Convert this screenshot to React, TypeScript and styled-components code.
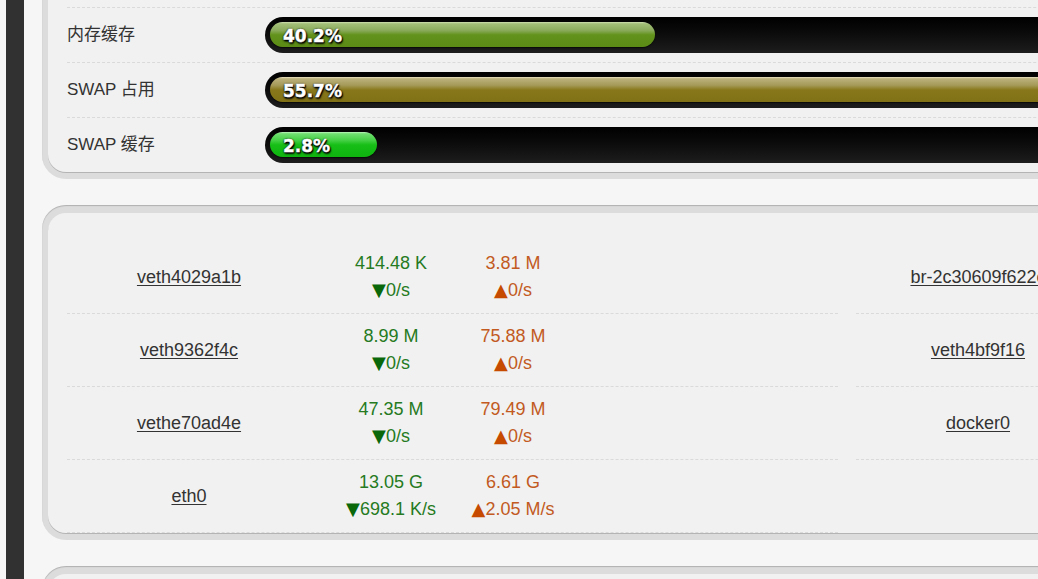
import React from 'react';
import styled, { createGlobalStyle } from 'styled-components';

const Global = createGlobalStyle`
  html, body { margin: 0; padding: 0; background: #f6f6f6; overflow: hidden; }
  body { font-family: "Liberation Sans", Arial, "Noto Sans CJK SC", sans-serif; color: #333; }
`;

const Shell = styled.div`
  display: flex;
  align-items: stretch;
  min-height: 100vh;
  width: 1700px;
`;

const SideEdge = styled.div`
  flex: none;
  width: 18px;
  margin-left: 6px;
  background: #313131;
`;

const Main = styled.main`
  flex: none;
  width: 1610px;
  margin-left: 18px;
  margin-top: -41px;
  display: flex;
  flex-direction: column;
  gap: 26px;
`;

const Frame = styled.section`
  background: #dcdcdc;
  border-radius: 24px;
  padding: 8px 6px 7px;
  box-shadow: inset 0 1px 1px rgba(0, 0, 0, 0.2);
`;

const Inner = styled.div<{ $top: number; $minH?: number }>`
  background: #f1f1f1;
  border-radius: 18px;
  box-shadow: 0 1px 0 #b4b4b4;
  padding: ${(p) => p.$top}px 19px 0;
  min-height: ${(p) => p.$minH ?? 0}px;
`;

const StatRow = styled.div`
  display: grid;
  grid-template-columns: 198px 1fr;
  align-items: center;
  padding: 9px 0;
  border-top: 1px dashed #dadada;
`;

const StatLabel = styled.div`
  font-size: 17px;
  color: #333;
  padding-bottom: 6px;
`;

const Track = styled.div`
  box-sizing: border-box;
  height: 36px;
  border-radius: 18px;
  background: linear-gradient(to bottom, #000 0%, #0a0a0a 40%, #1d1d1d 100%);
  padding: 5px 0 6px 5px;
`;

type Tone = 'green' | 'olive' | 'lime';

const tones: Record<Tone, string> = {
  green:
    'linear-gradient(to bottom, #d0e0b4 0%, #a3bf78 7%, #8bab5c 33%, #62921b 52%, #5b8b15 100%)',
  olive:
    'linear-gradient(to bottom, #ece4c2 0%, #bbb17c 7%, #a59a58 33%, #88781b 52%, #817116 100%)',
  lime:
    'linear-gradient(to bottom, #c0f4c0 0%, #70df70 7%, #45d045 33%, #16be16 52%, #0fb40f 100%)',
};

const Fill = styled.div<{ $tone: Tone }>`
  box-sizing: border-box;
  height: 25px;
  border-radius: 13px;
  background: ${(p) => tones[p.$tone]};
  box-shadow: 0 1px 1px rgba(0, 0, 0, 0.6);
  display: flex;
  align-items: center;
  padding: 2px 0 0 13px;
  font-family: "DejaVu Sans", Verdana, sans-serif;
  font-weight: bold;
  font-size: 17px;
  color: #fff;
  white-space: nowrap;
  -webkit-text-stroke: 0.4px #fff;
  text-shadow: 1px 1px 1px #000, 0 1px 2px #000, 0 0 2px #000, 1px 2px 2px rgba(0, 0, 0, 0.8);
`;

const NetGrid = styled.div`
  display: grid;
  grid-template-columns: 771px 771px;
  column-gap: 18px;
  align-items: start;
`;

const NetTable = styled.div``;

const NetRow = styled.div`
  display: grid;
  grid-template-columns: 244px 160px 84px 1fr;
  align-items: center;
  height: 72px;
  border-bottom: 1px dashed #dadada;
  font-size: 18px;
  line-height: 27px;
`;

const IfName = styled.a`
  justify-self: center;
  color: #333;
  text-decoration: underline;
  text-underline-offset: 2px;
  white-space: nowrap;
  cursor: pointer;
`;

const Traffic = styled.div<{ $dir: 'rx' | 'tx' }>`
  display: flex;
  flex-direction: column;
  align-items: center;
  white-space: nowrap;
  color: ${(p) => (p.$dir === 'rx' ? '#257a22' : '#c25a22')};
`;

const RateLine = styled.span`
  display: block;
  height: 27px;
`;

const Arrow = styled.span<{ $dir: 'rx' | 'tx' }>`
  font-family: "DejaVu Sans", sans-serif;
  line-height: 1;
  color: ${(p) => (p.$dir === 'rx' ? '#0a680a' : '#c64a00')};
`;

const stats: { label: string; pct: string; px: number; tone: Tone }[] = [
  { label: '内存缓存', pct: '40.2%', px: 385, tone: 'green' },
  { label: 'SWAP 占用', pct: '55.7%', px: 1100, tone: 'olive' },
  { label: 'SWAP 缓存', pct: '2.8%', px: 107, tone: 'lime' },
];

type Iface = { name: string; rx?: string; rxRate?: string; tx?: string; txRate?: string };

const leftIfaces: Iface[] = [
  { name: 'veth4029a1b', rx: '414.48 K', rxRate: '0/s', tx: '3.81 M', txRate: '0/s' },
  { name: 'veth9362f4c', rx: '8.99 M', rxRate: '0/s', tx: '75.88 M', txRate: '0/s' },
  { name: 'vethe70ad4e', rx: '47.35 M', rxRate: '0/s', tx: '79.49 M', txRate: '0/s' },
  { name: 'eth0', rx: '13.05 G', rxRate: '698.1 K/s', tx: '6.61 G', txRate: '2.05 M/s' },
];

const rightIfaces: Iface[] = [
  { name: 'br-2c30609f622c' },
  { name: 'veth4bf9f16' },
  { name: 'docker0' },
];

function NetRows({ list }: { list: Iface[] }) {
  return (
    <NetTable>
      {list.map((i) => (
        <NetRow key={i.name}>
          <IfName>{i.name}</IfName>
          {i.rx ? (
            <Traffic $dir="rx">
              <span>{i.rx}</span>
              <RateLine>
                <Arrow $dir="rx">▼</Arrow>
                {i.rxRate}
              </RateLine>
            </Traffic>
          ) : (
            <span />
          )}
          {i.tx ? (
            <Traffic $dir="tx">
              <span>{i.tx}</span>
              <RateLine>
                <Arrow $dir="tx">▲</Arrow>
                {i.txRate}
              </RateLine>
            </Traffic>
          ) : (
            <span />
          )}
          <span />
        </NetRow>
      ))}
    </NetTable>
  );
}

export default function App() {
  return (
    <>
      <Global />
      <Shell>
        <SideEdge />
        <Main>
          <Frame>
            <Inner $top={40}>
              {stats.map((s) => (
                <StatRow key={s.label}>
                  <StatLabel>{s.label}</StatLabel>
                  <Track>
                    <Fill $tone={s.tone} style={{ width: s.px }}>
                      {s.pct}
                    </Fill>
                  </Track>
                </StatRow>
              ))}
            </Inner>
          </Frame>
          <Frame>
            <Inner $top={28}>
              <NetGrid>
                <NetRows list={leftIfaces} />
                <NetRows list={rightIfaces} />
              </NetGrid>
            </Inner>
          </Frame>
          <Frame>
            <Inner $top={0} $minH={200} />
          </Frame>
        </Main>
      </Shell>
    </>
  );
}
